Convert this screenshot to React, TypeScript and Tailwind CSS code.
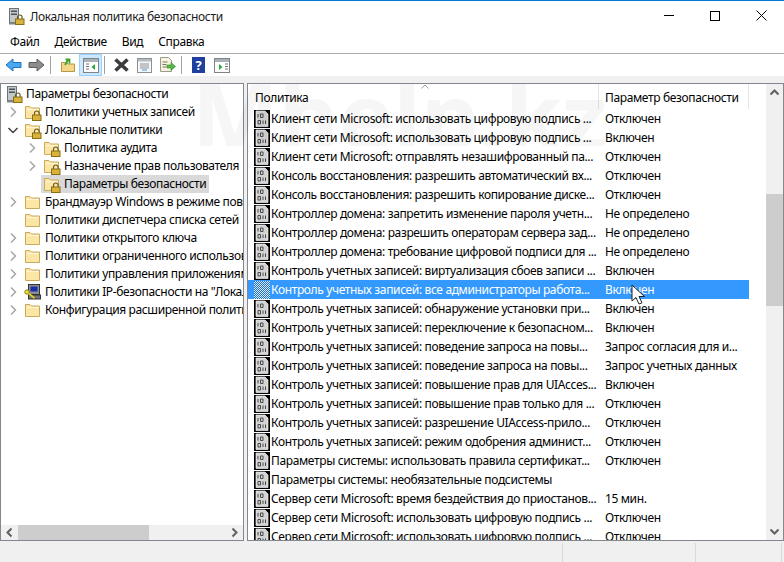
import type { ReactNode } from "react";

const font = { fontFamily: '"Noto Sans", sans-serif', letterSpacing: "-0.36px" };

const treeRows: { label: string; depth: number; chevron?: "right" | "down"; icon: "lock" | "plain" | "ip"; selected?: boolean }[] = [
  { label: "Политики учетных записей", depth: 0, chevron: "right", icon: "lock" },
  { label: "Локальные политики", depth: 0, chevron: "down", icon: "lock" },
  { label: "Политика аудита", depth: 1, chevron: "right", icon: "lock" },
  { label: "Назначение прав пользователя", depth: 1, chevron: "right", icon: "lock" },
  { label: "Параметры безопасности", depth: 1, icon: "lock", selected: true },
  { label: "Брандмауэр Windows в режиме повышенной", depth: 0, chevron: "right", icon: "plain" },
  { label: "Политики диспетчера списка сетей", depth: 0, icon: "plain" },
  { label: "Политики открытого ключа", depth: 0, chevron: "right", icon: "plain" },
  { label: "Политики ограниченного использования", depth: 0, chevron: "right", icon: "plain" },
  { label: "Политики управления приложениями", depth: 0, chevron: "right", icon: "plain" },
  { label: 'Политики IP-безопасности на "Локальный', depth: 0, chevron: "right", icon: "ip" },
  { label: "Конфигурация расширенной политики", depth: 0, chevron: "right", icon: "plain" },
];

const policies: [string, string][] = [
  ["Клиент сети Microsoft: использовать цифровую подпись ...", "Отключен"],
  ["Клиент сети Microsoft: использовать цифровую подпись ...", "Включен"],
  ["Клиент сети Microsoft: отправлять незашифрованный па...", "Отключен"],
  ["Консоль восстановления: разрешить автоматический вх...", "Отключен"],
  ["Консоль восстановления: разрешить копирование диске...", "Отключен"],
  ["Контроллер домена: запретить изменение пароля учетн...", "Не определено"],
  ["Контроллер домена: разрешить операторам сервера зад...", "Не определено"],
  ["Контроллер домена: требование цифровой подписи для ...", "Не определено"],
  ["Контроль учетных записей: виртуализация сбоев записи ...", "Включен"],
  ["Контроль учетных записей: все администраторы работа...", "Включен"],
  ["Контроль учетных записей: обнаружение установки при...", "Включен"],
  ["Контроль учетных записей: переключение к безопасном...", "Включен"],
  ["Контроль учетных записей: поведение запроса на повы...", "Запрос согласия для и..."],
  ["Контроль учетных записей: поведение запроса на повы...", "Запрос учетных данных"],
  ["Контроль учетных записей: повышение прав для UIAcces...", "Включен"],
  ["Контроль учетных записей: повышение прав только для ...", "Отключен"],
  ["Контроль учетных записей: разрешение UIAccess-прило...", "Отключен"],
  ["Контроль учетных записей: режим одобрения админист...", "Отключен"],
  ["Параметры системы: использовать правила сертификат...", "Отключен"],
  ["Параметры системы: необязательные подсистемы", ""],
  ["Сервер сети Microsoft: время бездействия до приостанов...", "15 мин."],
  ["Сервер сети Microsoft: использовать цифровую подпись ...", "Отключен"],
  ["Сервер сети Microsoft: использовать цифровую подпись ...", "Отключен"],
];

function LockShape({ x, y }: { x: number; y: number }) {
  return (
    <g transform={`translate(${x} ${y})`}>
      <path d="M2.5 4V2.3a2.3 2.3 0 0 1 4.6 0V4" fill="none" stroke="#6b5a1e" strokeWidth="1.2" />
      <rect x="0.5" y="4" width="8.5" height="5.5" fill="#d9b23c" stroke="#8a6d14" />
    </g>
  );
}

function ServerLock() {
  return (
    <svg width="16" height="17" viewBox="0 0 16 17" className="shrink-0">
      <rect x="0.5" y="0.5" width="9" height="14" fill="#c2c8cc" stroke="#6d7478" />
      <rect x="2" y="2.5" width="6" height="1.5" fill="#4b5357" />
      <rect x="2" y="5.5" width="6" height="1.5" fill="#4b5357" />
      <rect x="0" y="14.5" width="10" height="2" fill="#7f878b" />
      <LockShape x={6} y={7} />
    </svg>
  );
}

function Folder({ lock }: { lock?: boolean }) {
  return (
    <svg width="18" height="18" viewBox="0 0 18 18" className="shrink-0">
      <path d="M1.5 3.5h4.5l1.500 1.500h8v10.500h-14z" fill="#fbe6a6" stroke="#c9a95a" />
      <path d="M2.500 6.500h12" stroke="#fff6d8" />
      {lock && <LockShape x={8} y={8} />}
    </svg>
  );
}

function IpIcon() {
  return (
    <svg width="18" height="18" viewBox="0 0 18 18" className="shrink-0">
      <rect x="4.500" y="1.500" width="11" height="10" fill="#8b8f93" stroke="#333" />
      <rect x="6.500" y="3.500" width="7" height="5" fill="#1a2ea8" />
      <rect x="4.500" y="12" width="12" height="4" fill="#6f7377" stroke="#333" />
      <circle cx="3" cy="9" r="2.200" fill="#f2e23a" stroke="#8a7f10" />
      <path d="M4.500 10.500l6 4.500" stroke="#e4d32c" strokeWidth="1.600" />
    </svg>
  );
}

function Chevron({ dir }: { dir?: "right" | "down" }) {
  if (!dir) return <span className="w-[16px] shrink-0" />;
  return (
    <svg width="16" height="16" viewBox="0 0 16 16" className="shrink-0">
      {dir === "right" ? (
        <path d="M6 3.500l4.500 4.500L6 12.500" fill="none" stroke="#a6a6a6" strokeWidth="1.500" />
      ) : (
        <path d="M3.500 6L8 10.500 12.500 6" fill="none" stroke="#404040" strokeWidth="1.500" />
      )}
    </svg>
  );
}

function PolicyIcon({ active }: { active?: boolean }) {
  if (active) {
    return (
      <span className="h-[18px] w-[16px] shrink-0 bg-[repeating-conic-gradient(#dcecff_0_25%,#1f6fc4_0_50%)] bg-[length:2px_2px]" />
    );
  }
  return (
    <svg width="16" height="18" viewBox="0 0 16 18" className="shrink-0">
      <rect width="16" height="18" fill="#000" />
      <path d="M2 1h9l3 3v12.500H2z" fill="#d4d4d4" stroke="#efefef" strokeWidth="0.700" />
      <path d="M4 4v3.500M6.500 4v3.500H9V4zM4 10.500h2.500V14H4zM9 10.500V14M11.500 10.500V14" fill="none" stroke="#4a4a4a" strokeWidth="1" />
    </svg>
  );
}

function ToolBtn({ children, active }: { children: ReactNode; active?: boolean }) {
  return (
    <span
      className={`flex h-[22px] w-[23px] items-center justify-center border ${
        active ? "border-[#99d1ff] bg-[#cce8ff]" : "border-transparent"
      }`}
    >
      {children}
    </span>
  );
}

function ToolSep() {
  return <span className="ml-[2px] mr-[5px] h-[18px] w-px bg-[#a0a0a0]" />;
}

function WindowIcon({ side, color }: { side: "left" | "right"; color: string }) {
  return (
    <svg width="16" height="15" viewBox="0 0 16 15">
      <rect x="0.500" y="0.500" width="15" height="14" fill="#fdfdfd" stroke="#7d8488" />
      <rect x="1" y="1" width="14" height="3" fill="#aab2b8" />
      <path d={side === "left" ? "M3 6h3M3 8.500h3M3 11h3" : "M11 6h3M11 8.500h3M11 11h3"} stroke="#6d7478" />
      <path d={side === "left" ? "M12 6v6l-3.500-3z" : "M5 6v6l3.500-3z"} fill={color} />
    </svg>
  );
}

function Toolbar() {
  return (
    <div className="flex h-[22px] items-center bg-white pl-[2px]">
      <ToolBtn>
        <svg width="17" height="14" viewBox="0 0 17 14">
          <path d="M1 7l7-6v3.500h8v5H8V13z" fill="#4aa8f0" stroke="#1c70c0" />
        </svg>
      </ToolBtn>
      <ToolBtn>
        <svg width="17" height="14" viewBox="0 0 17 14">
          <path d="M16 7L9 1v3.500H1v5h8V13z" fill="#8c8c8c" stroke="#5f5f5f" />
        </svg>
      </ToolBtn>
      <ToolSep />
      <ToolBtn>
        <svg width="16" height="16" viewBox="0 0 16 16">
          <path d="M1.500 5.500h5l1.500 1.500h6.500v7.500h-13z" fill="#f3d88a" stroke="#b6974a" />
          <path d="M5 8l3-5M5.500 2.500h4v4" fill="none" stroke="#3ea32e" strokeWidth="1.800" />
        </svg>
      </ToolBtn>
      <ToolBtn active>
        <WindowIcon side="left" color="#2ea83a" />
      </ToolBtn>
      <ToolSep />
      <ToolBtn>
        <svg width="17" height="16" viewBox="0 0 17 16">
          <path d="M2.500 2.500l12 11M14.500 2.500l-12 11" stroke="#3c3c3c" strokeWidth="3.600" />
        </svg>
      </ToolBtn>
      <ToolBtn>
        <svg width="15" height="15" viewBox="0 0 15 15">
          <rect x="0.500" y="0.500" width="14" height="14" fill="#f7f7f7" stroke="#8b9196" />
          <rect x="1" y="1" width="13" height="2.500" fill="#b5bcc1" />
          <path d="M3 6h9M3 8h9M3 10h9" stroke="#8b9196" />
          <path d="M5 12h5" stroke="#3a9ae8" />
        </svg>
      </ToolBtn>
      <ToolBtn>
        <svg width="17" height="16" viewBox="0 0 17 16">
          <path d="M1.500 0.500h8l3 3v11h-11z" fill="#f8f3df" stroke="#9a9a8a" />
          <path d="M3.500 5h5M3.500 7.500h4M3.500 10h4" stroke="#77776a" />
          <path d="M8 8h4V5.500L16.500 9.500 12 13.500V11H8z" fill="#58b947" stroke="#2f8a25" strokeWidth="0.600" />
        </svg>
      </ToolBtn>
      <ToolSep />
      <ToolBtn>
        <span className="flex h-[16px] w-[13px] items-center justify-center bg-[#1f3f9e] text-[13px] font-bold leading-none text-white">
          ?
        </span>
      </ToolBtn>
      <ToolBtn>
        <WindowIcon side="right" color="#2ea83a" />
      </ToolBtn>
    </div>
  );
}

function TreeRow({ row }: { row: (typeof treeRows)[number] }) {
  return (
    <div className={`flex h-[18px] items-center ${row.depth === 1 ? "pl-[23px]" : "pl-[4px]"}`}>
      <Chevron dir={row.chevron} />
      <span
        className={`ml-[1px] flex h-[18px] items-center gap-[3px] whitespace-nowrap pl-[2px] pr-[3px] ${
          row.selected ? "bg-[#d9d9d9]" : ""
        }`}
      >
        {row.icon === "ip" ? <IpIcon /> : <Folder lock={row.icon === "lock"} />}
        <span>{row.label}</span>
      </span>
    </div>
  );
}

function ScrollArrow({ d }: { d: string }) {
  return (
    <svg width="17" height="17" viewBox="0 0 17 17" className="shrink-0">
      <path d={d} fill="none" stroke="#606060" strokeWidth="2" />
    </svg>
  );
}

export default function App() {
  return (
    <div
      className="relative flex h-[562px] w-[784px] flex-col overflow-hidden bg-[#f0f0f0] text-[12px] text-black"
      style={font}
    >
      <div className="flex h-[32px] items-center border-t border-[#0078d7] bg-white">
        <span className="ml-[9px] mr-[5px] flex">
          <ServerLock />
        </span>
        <span className="text-[#1a1a1a]">Локальная политика безопасности</span>
        <div className="ml-auto flex h-full pb-[2px]">
          <span className="flex w-[46px] items-center justify-center">
            <span className="h-px w-[10px] bg-black" />
          </span>
          <span className="flex w-[46px] items-center justify-center">
            <span className="h-[10px] w-[10px] border border-black" />
          </span>
          <span className="flex w-[46px] items-center justify-center">
            <svg width="11" height="11" viewBox="0 0 11 11">
              <path d="M0.500 0.500l10 10M10.500 0.500l-10 10" stroke="#000" />
            </svg>
          </span>
        </div>
      </div>

      <div className="flex h-[22px] items-center gap-[15px] border-b border-[#a9a9b0] bg-white pb-[2px] pl-[10px]">
        <span>Файл</span>
        <span>Действие</span>
        <span>Вид</span>
        <span>Справка</span>
      </div>

      <Toolbar />

      <div className="flex min-h-0 flex-1 gap-[3px] pt-[7px]">
        <div className="flex w-[244px] shrink-0 flex-col border border-[#828790] bg-white">
          <div className="min-h-0 flex-1 overflow-hidden pt-[1px]">
            <div className="flex h-[18px] items-center gap-[3px] whitespace-nowrap pl-[6px]">
              <ServerLock />
              <span>Параметры безопасности</span>
            </div>
            {treeRows.map((row) => (
              <TreeRow key={row.label} row={row} />
            ))}
          </div>
          <div className="flex h-[15px] items-center bg-[#f0f0f0]">
            <ScrollArrow d="M10.500 4.500L6.500 8.500l4 4" />
            <div className="h-full w-[131px] bg-[#cdcdcd]" />
            <div className="flex-1" />
            <ScrollArrow d="M6.500 4.500l4 4-4 4" />
          </div>
        </div>

        <div className="flex min-w-0 flex-1 border border-[#828790] bg-white">
          <div className="min-w-0 flex-1 overflow-hidden">
            <div className="relative flex h-[25px] items-center">
              <span className="w-[350px] pl-[7px] pt-[2px]">Политика</span>
              <span className="h-full w-px bg-[#e5e5e5]" />
              <span className="w-[149px] pl-[6px] pt-[2px]">Параметр безопасности</span>
              <span className="h-full w-px bg-[#e5e5e5]" />
              <svg width="8" height="5" viewBox="0 0 8 5" className="absolute left-[173px] top-0">
                <path d="M0.500 4.500L4 1l3.500 3.500" fill="none" stroke="#9aa0a6" />
              </svg>
            </div>
            {policies.map(([name, value], i) => {
              const active = i === 9;
              return (
                <div
                  key={i}
                  className={`flex h-[19px] items-center whitespace-nowrap pl-[6px] ${
                    active ? "w-[501px] bg-[#3399ff] text-white" : ""
                  }`}
                >
                  <PolicyIcon active={active} />
                  <span className="w-[328px] overflow-hidden pl-[1px]">{name}</span>
                  <span className="pl-[7px]">{value}</span>
                </div>
              );
            })}
          </div>
          <div className="flex w-[17px] shrink-0 flex-col bg-[#f0f0f0]">
            <ScrollArrow d="M4.500 10.500l4-4 4 4" />
            <div className="mt-[93px] h-[112px] bg-[#cdcdcd]" />
            <div className="flex-1" />
            <ScrollArrow d="M4.500 6.500l4 4 4-4" />
          </div>
        </div>
      </div>

      <div className="flex h-[21px] shrink-0 items-stretch pt-[2px]">
        <span className="w-[563px] border-r border-[#d9d9d9]" />
        <span className="w-[133px] border-r border-[#d9d9d9]" />
        <span className="w-[86px] border-r border-[#d9d9d9]" />
      </div>

      {/* site watermark */}
      <div className="pointer-events-none absolute left-[192px] top-[84px] h-[62px] w-[420px] overflow-hidden">
        <span className="absolute left-0 top-[-34px] text-[92px] font-bold leading-[130px] tracking-normal text-black opacity-[0.03]">
          Mhelp.kz
        </span>
      </div>

      {/* mouse pointer */}
      <svg width="14" height="22" viewBox="0 0 14 22" className="absolute left-[631px] top-[284px]">
        <path d="M1 1v16l4-3.500 3 6.500 3-1.200-3-6.300h5.500z" fill="#fff" stroke="#222" />
      </svg>
    </div>
  );
}
